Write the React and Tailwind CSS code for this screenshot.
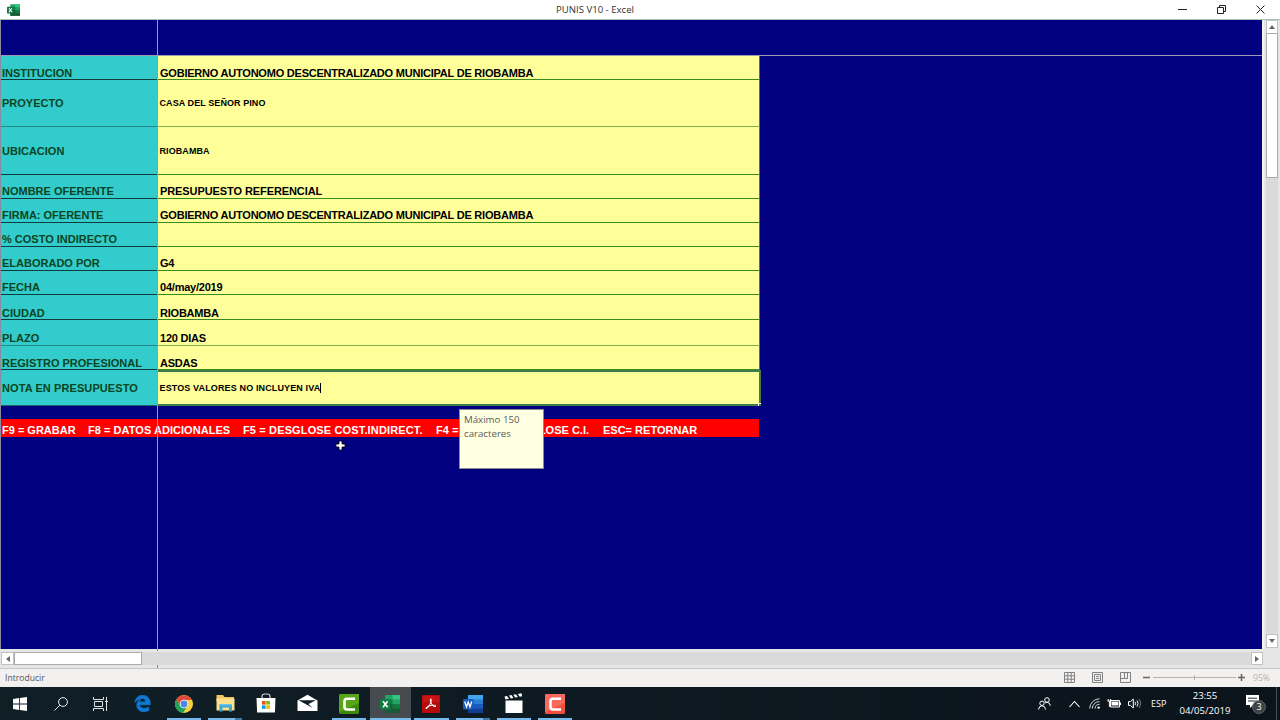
import React from 'react';
import { FaEdgeLegacy } from 'react-icons/fa6';

const dark = { line: 'border-[#123c3c]', vline: 'border-b-[#3c8a1e]' };
const soft = { line: 'border-[#26888a]', vline: 'border-b-[#7fae4c]' };

const rows = [
  { label: 'INSTITUCION', value: 'GOBIERNO AUTONOMO DESCENTRALIZADO MUNICIPAL DE RIOBAMBA', h: 'h-[24px]', pad: 'pt-[11px]', ...dark },
  { label: 'PROYECTO', value: 'CASA DEL SEÑOR PINO', small: true, h: 'h-[47px]', pad: 'pt-[17px]', ...soft },
  { label: 'UBICACION', value: 'RIOBAMBA', small: true, h: 'h-[48px]', pad: 'pt-[18px]', ...dark },
  { label: 'NOMBRE OFERENTE', value: 'PRESUPUESTO REFERENCIAL', wide: true, h: 'h-[24px]', pad: 'pt-[10px]', ...dark },
  { label: 'FIRMA: OFERENTE', value: 'GOBIERNO AUTONOMO DESCENTRALIZADO MUNICIPAL DE RIOBAMBA', h: 'h-[24px]', pad: 'pt-[10px]', ...dark },
  { label: '% COSTO INDIRECTO', value: '', h: 'h-[24px]', pad: 'pt-[10px]', ...dark },
  { label: 'ELABORADO POR', value: 'G4', h: 'h-[24px]', pad: 'pt-[10px]', ...dark },
  { label: 'FECHA', value: '04/may/2019', h: 'h-[24px]', pad: 'pt-[10px]', ...dark },
  { label: 'CIUDAD', value: 'RIOBAMBA', h: 'h-[25px]', pad: 'pt-[12px]', ...dark },
  { label: 'PLAZO', value: '120 DIAS', h: 'h-[26px]', pad: 'pt-[12px]', ...soft },
  { label: 'REGISTRO PROFESIONAL', value: 'ASDAS', h: 'h-[24px]', pad: 'pt-[11px]', ...dark },
];

function valueText(r) {
  if (r.small) return 'pl-[1.5px] text-[9px] tracking-[0.08px]';
  return r.wide ? 'pl-[2px] text-[11px] tracking-[-0.09px]' : 'pl-[2px] text-[11px] tracking-[-0.22px]';
}

function ExcelIcon({ className }) {
  return (
    <svg className={className} viewBox="0 0 20 18">
      <rect x="5" y="0" width="15" height="18" rx="1" fill="#21a366" />
      <rect x="12.5" y="0" width="7.5" height="4.5" fill="#33c481" />
      <rect x="5" y="4.5" width="7.5" height="4.5" fill="#107c41" />
      <rect x="5" y="9" width="15" height="9" fill="#185c37" />
      <rect x="12.5" y="9" width="7.5" height="4.5" fill="#107c41" />
      <rect x="0" y="4" width="10.5" height="10.5" rx="1" fill="#107c41" />
      <path d="M3 6.3 7.6 12.2M7.6 6.3 3 12.2" stroke="#fff" strokeWidth="1.6" />
    </svg>
  );
}

function WordIcon() {
  return (
    <svg className="h-[18px] w-[20px]" viewBox="0 0 20 18">
      <rect x="5" y="0" width="15" height="18" rx="1" fill="#2b7cd3" />
      <rect x="5" y="0" width="15" height="4.5" fill="#41a5ee" />
      <rect x="5" y="9" width="15" height="4.5" fill="#185abd" />
      <rect x="5" y="13.5" width="15" height="4.5" fill="#103f91" />
      <rect x="0" y="4" width="10.5" height="10.5" rx="1" fill="#185abd" />
      <path d="M1.7 6.5 3.5 12 5.2 7 7 12 8.8 6.5" stroke="#fff" strokeWidth="1.3" fill="none" />
    </svg>
  );
}

function CamtasiaIcon({ from, to }) {
  return (
    <svg className="h-[20px] w-[20px]" viewBox="0 0 20 20">
      <rect width="20" height="20" rx="1.5" fill={to} />
      <path d="M1.5 0H20V9L0 18V1.5Q0 0 1.5 0Z" fill={from} />
      <path d="M16 4.7H8Q5.5 4.7 5.5 7.2V13Q5.5 15.5 8 15.5H16" fill="none" stroke="#fff" strokeWidth="2.6" />
    </svg>
  );
}

function ChromeIcon() {
  return (
    <svg className="h-[18px] w-[18px]" viewBox="0 0 18 18">
      <circle cx="9" cy="9" r="9" fill="#f9cf3d" />
      <path d="M9 9 1.2 4.5A9 9 0 0 1 16.8 4.9H9Z" fill="#dd4b3e" />
      <path d="M1.2 4.5A9 9 0 0 0 8 17.95L12.5 11 9 9 5.2 11Z" fill="#1fa25b" />
      <path d="M1.2 4.5 5.3 11 9 5Z" fill="#dd4b3e" />
      <path d="M1.2 4.5 5.5 11.2 4.2 8.5Z" fill="#1fa25b" />
      <circle cx="9" cy="9" r="4.3" fill="#fff" />
      <circle cx="9" cy="9" r="3.4" fill="#4a86e8" />
    </svg>
  );
}

function ExplorerIcon() {
  return (
    <svg className="h-[17px] w-[19px]" viewBox="0 0 19 17">
      <path d="M.5 0h6.5l1.5 2H18v4H.5Z" fill="#f0c75e" />
      <path d="M.5 3.5h18V15.5H.5Z" fill="#fbe08e" />
      <path d="M3.5 9h12.5v7.5h-3v-4H6.5v4h-3Z" fill="#3ba7d9" />
      <path d="M3.5 9h12.5v1.5H3.5Z" fill="#69c5e8" />
    </svg>
  );
}

function StoreIcon() {
  return (
    <svg className="-mt-[2px] h-[20px] w-[20px]" viewBox="0 0 20 20">
      <path d="M6 5V3.5Q6 1 8.5 1h3Q14 1 14 3.5V5" fill="none" stroke="#c8d0d4" strokeWidth="1.2" />
      <path d="M.5 5h19l-.6 14.5H1.1Z" fill="#fff" />
      <rect x="6" y="8" width="3.6" height="3.6" fill="#f05021" />
      <rect x="10.3" y="8" width="3.6" height="3.6" fill="#7db900" />
      <rect x="6" y="12.3" width="3.6" height="3.6" fill="#00a3ee" />
      <rect x="10.3" y="12.3" width="3.6" height="3.6" fill="#fdb900" />
    </svg>
  );
}

function AcrobatIcon() {
  return (
    <svg className="h-[18px] w-[18px]" viewBox="0 0 18 18">
      <rect width="18" height="18" rx="1" fill="#b40c0c" />
      <rect x="1" y="1" width="16" height="6" fill="#c81414" />
      <path d="M8.2 4.2Q9.6 3.2 9.3 5.5 8.7 9.5 5.2 13.3 3.7 14.4 4 13 5.2 11 9 10.4 13.8 9.8 14 11.2 13.2 12.4 11 10.8 8.5 8.5 8.2 4.2Z" fill="none" stroke="#fff" strokeWidth="1" />
    </svg>
  );
}

function ClapperIcon() {
  return (
    <svg className="-mt-[1px] h-[20px] w-[20px]" viewBox="0 0 20 20">
      <path d="M1.5 7.5h17V20h-17Z" fill="#fff" />
      <path d="M.5 3.5 3 3l2 2.8-3.5.8ZM5 2.6l2.5-.5 2 2.8-2.7.5ZM9.3 1.8l2.6-.5 2 2.8-2.7.5ZM13.8 1 17.5.3l.6 2.9-2.3.5Z" fill="#fff" />
    </svg>
  );
}

function MailIcon() {
  return (
    <svg className="-mt-[1px] h-[18px] w-[21px]" viewBox="0 0 21 18">
      <path d="M.5 6.5 10.5.7l10 5.8V17H.5Z" fill="#fff" />
      <path d="M1.5 6.3h17.5L11.5 10l4 3.8Z" fill="#101c23" />
    </svg>
  );
}

const apps = [
  { id: 'edge', icon: <FaEdgeLegacy className="h-[17px] w-[17px] text-[#0f78d4]" stroke="currentColor" strokeWidth="22" /> },
  { id: 'chrome', icon: <ChromeIcon />, bar: true },
  { id: 'explorer', icon: <ExplorerIcon />, bar: true, multi: true },
  { id: 'store', icon: <StoreIcon /> },
  { id: 'mail', icon: <MailIcon /> },
  { id: 'camtasia', icon: <CamtasiaIcon from="#58a618" to="#3f8a0c" />, bar: true },
  { id: 'excel', icon: <ExcelIcon className="h-[18px] w-[20px]" />, bar: true, active: true },
  { id: 'acrobat', icon: <AcrobatIcon />, bar: true },
  { id: 'word', icon: <WordIcon />, bar: true, multi: true },
  { id: 'movies', icon: <ClapperIcon />, bar: true },
  { id: 'recorder', icon: <CamtasiaIcon from="#f96a5d" to="#f0503f" />, bar: true },
];

function TitleBar() {
  return (
    <header className="relative flex h-[20px] items-center border-b border-[#a9c4b8] bg-white">
      <ExcelIcon className="ml-[7px] h-[12px] w-[13px]" />
      <div className="absolute inset-x-0 top-[2px] text-center font-['Open_Sans',sans-serif] text-[9.6px] leading-[15px] text-[#333]"><span className="relative -left-[45px]">PUNIS V10 - Excel</span></div>
      <div className="mr-[15px] ml-auto flex items-center gap-[30px]">
        <svg className="h-[9px] w-[9px]" viewBox="0 0 9 9"><path d="M0 4.5h9" stroke="#222" /></svg>
        <svg className="h-[9px] w-[9px]" viewBox="0 0 9 9"><path d="M.5 2.5h6v6h-6ZM2.5 2V.5h6v6H7" fill="none" stroke="#222" /></svg>
        <svg className="h-[9px] w-[9px]" viewBox="0 0 9 9"><path d="M.5.5l8 8M8.5.5l-8 8" stroke="#222" /></svg>
      </div>
    </header>
  );
}

function Sheet() {
  return (
    <main className="relative h-[629px] w-[1262px] overflow-hidden border-l border-[#8a8aa0] bg-[#000080] font-['Liberation_Sans',sans-serif] font-bold">
      <div className="h-[36px] border-b border-[#9a9ab4]" />
      {rows.map((r) => (
        <div key={r.label} className={`flex ${r.h} w-[759px]`}>
          <div className={`w-[156px] border-b bg-[#33cccc] pl-[1px] ${r.line} ${r.pad} text-[11px] leading-[12px] whitespace-nowrap text-[#0b4422]`}>{r.label}</div>
          <div className={`flex-1 border-r border-b border-l border-r-[#3c8a1e] border-l-[#8f8f8f] bg-[#ffff99] ${r.vline} ${r.pad} leading-[12px] whitespace-nowrap text-black ${valueText(r)}`}>{r.value}</div>
        </div>
      ))}
      <div className="flex h-[36px] w-[760px]">
        <div className="w-[156px] border-b border-[#1c6466] bg-[#33cccc] pt-[12px] pl-[1px] text-[11px] leading-[12px] tracking-[0.09px] whitespace-nowrap text-[#0b4422]">NOTA EN PRESUPUESTO</div>
        <div className="relative flex flex-1 items-start border-t-2 border-r-2 border-b-2 border-l border-[#3f7d4d] border-l-[#8f8f8f] bg-[#ffff99] pt-[10px] pl-[1.5px] text-[9px] leading-[12px] tracking-[0.13px] whitespace-nowrap text-black">
          ESTOS VALORES NO INCLUYEN IVA
          <span className="mt-[1px] h-[10px] w-px bg-black" />
          <span className="absolute -right-[2px] -bottom-[2px] h-[3px] w-[3px] border-t border-l border-white bg-[#217346]" />
        </div>
      </div>
      <div className="mt-[13px] flex h-[18px] w-[758px] bg-[#ff0000] pt-[5px] pl-[1px] text-[11px] leading-[12px] whitespace-nowrap text-white">
        <span className="w-[86px]">F9 = GRABAR</span>
        <span className="w-[155px] tracking-[0.04px]">F8 = DATOS ADICIONALES</span>
        <span className="w-[193px] tracking-[0.14px]">F5 = DESGLOSE COST.INDIRECT.</span>
        <span className="flex w-[167px] justify-between pr-[14px]"><span>F4 =</span><span>DESGLOSE C.I.</span></span>
        <span>ESC= RETORNAR</span>
      </div>
      <div className="absolute top-0 left-[156px] h-full w-px bg-[#9a9aa8]" />
      <div className="absolute top-[389px] left-[458px] h-[60px] w-[85px] border border-[#8a8a90] bg-[#ffffe1] pt-[3px] pl-[4px] font-['Open_Sans',sans-serif] text-[9.7px] leading-[13.5px] font-normal text-[#5c5c5c]">Máximo 150<br />caracteres</div>
      <svg className="absolute top-[420px] left-[334px] h-[11px] w-[11px]" viewBox="0 0 11 11">
        <path d="M4 1h3v3h3v3H7v3H4V7H1V4h3Z" fill="#fff" stroke="#000" strokeWidth=".8" />
      </svg>
    </main>
  );
}

function VerticalScroll() {
  return (
    <aside className="flex h-[629px] w-[18px] flex-col items-center border-l-2 border-[#f2f2f2] bg-[#e6e6e6]">
      <div className="flex h-[14px] w-[12px] items-center justify-center border border-[#c2c2c2] bg-white">
        <svg className="h-[4px] w-[6px]" viewBox="0 0 6 4"><path d="M3 0 6 4H0Z" fill="#666" /></svg>
      </div>
      <div className="-mt-px h-[145px] w-[12px] border border-[#ababab] bg-white" />
      <div className="w-[12px] flex-1 bg-[#dadada]" />
      <div className="mb-[1px] flex h-[14px] w-[12px] items-center justify-center border border-[#c2c2c2] bg-white">
        <svg className="h-[4px] w-[6px]" viewBox="0 0 6 4"><path d="M3 4 6 0H0Z" fill="#666" /></svg>
      </div>
    </aside>
  );
}

function HorizontalScroll() {
  return (
    <div className="relative flex h-[20px] items-start border-b border-[#c6c6c6] bg-[#e6e6e6] pt-[3px]">
      <div className="ml-[1px] flex h-[13px] w-[13px] items-center justify-center border border-[#c2c2c2] bg-white">
        <svg className="h-[6px] w-[4px]" viewBox="0 0 4 6"><path d="M0 3 4 0V6Z" fill="#666" /></svg>
      </div>
      <div className="h-[13px] w-[128px] border border-[#ababab] bg-white" />
      <div className="h-[13px] w-[1109px] bg-[#dadada]" />
      <div className="flex h-[13px] w-[12px] items-center justify-center border border-[#c2c2c2] bg-white">
        <svg className="h-[6px] w-[4px]" viewBox="0 0 4 6"><path d="M4 3 0 0V6Z" fill="#666" /></svg>
      </div>
      <span className="absolute top-0 left-[157px] h-[2px] w-px bg-[#888]" />
      <span className="absolute top-[16px] left-[157px] h-[3px] w-px bg-[#888]" />
    </div>
  );
}

function StatusBar() {
  return (
    <div className="flex h-[18px] items-center bg-[#f2f1ef] font-['Open_Sans',sans-serif] text-[8.6px] text-[#555]">
      <span className="mt-[1px] ml-[5px]">Introducir</span>
      <svg className="-mt-[1px] ml-auto h-[11px] w-[11px]" viewBox="0 0 11 11"><path d="M.5.5h10v10H.5ZM.5 3.8h10M.5 7.2h10M3.8.5v10M7.2.5v10" fill="none" stroke="#808080" /></svg>
      <svg className="-mt-[1px] ml-[17px] h-[11px] w-[11px]" viewBox="0 0 11 11"><path d="M.5.5h10v10H.5ZM2.5 2.5h6v6h-6ZM4 4.5h3M4 6.5h3" fill="none" stroke="#808080" /></svg>
      <svg className="-mt-[1px] ml-[17px] h-[11px] w-[11px]" viewBox="0 0 11 11"><path d="M.5.5h10v10H.5ZM4.5.5v6h-4M7.5.5v6H4.5" fill="none" stroke="#808080" /></svg>
      <svg className="-mt-[1px] ml-[12px] h-[9px] w-[103px]" viewBox="0 0 103 9">
        <path d="M0 4.5h7M95 4.5h7M98.5 1v7" stroke="#666" strokeWidth="1.6" />
        <path d="M10 4.5h83M51.5 2v5" stroke="#b4b4b4" />
      </svg>
      <span className="mt-[1px] mr-[10px] ml-[7px] w-[17px] text-[#b3b3b3]">95%</span>
    </div>
  );
}

function Taskbar() {
  return (
    <footer className="flex h-[33px] bg-gradient-to-r from-[#101f26] to-[#0b131b] font-['Open_Sans',sans-serif] text-white">
      <div className="flex w-[40px] items-center justify-center">
        <svg className="h-[14px] w-[14px]" viewBox="0 0 14 14"><path d="M0 2 6.2 1.1V6.6H0ZM7 1 14 0V6.6H7ZM0 7.4H6.2V12.9L0 12ZM7 7.4H14V14L7 13Z" fill="#fff" /></svg>
      </div>
      <div className="flex w-[41px] items-center justify-center">
        <svg className="h-[14px] w-[14px]" viewBox="0 0 14 14"><circle cx="9" cy="5" r="4.4" fill="none" stroke="#e8eef0" /><path d="M5.8 8.2.5 13.5" stroke="#e8eef0" /></svg>
      </div>
      <div className="flex w-[41px] items-center justify-center pr-[3px]">
        <svg className="h-[14px] w-[15px]" viewBox="0 0 15 14"><path d="M1.5 4.5h8v5h-8ZM.5 0v2.5h10V0M.5 14v-2.5h10V14M13.5 0v14M12 4.5h3" fill="none" stroke="#dfe6e8" /></svg>
      </div>
      {apps.map((a) => (
        <div key={a.id} className={`relative flex w-[41.25px] items-center justify-center ${a.active ? 'bg-[#454b4f]' : ''}`}>
          {a.icon}
          {a.bar && (
            <span className={`absolute bottom-0 flex h-[2px] bg-[#76b9ed] ${a.active ? 'inset-x-0' : 'inset-x-[3.5px]'}`}>
              {a.multi && <span className="ml-auto w-[7px] bg-[#3f78a4]" />}
            </span>
          )}
        </div>
      ))}
      <div className="ml-auto flex items-center">
        <svg className="h-[13px] w-[13px]" viewBox="0 0 13 13"><circle cx="9" cy="3" r="2.3" fill="none" stroke="#fff" /><circle cx="4" cy="6.3" r="2.2" fill="none" stroke="#fff" /><path d="M.6 12.5Q.8 8.8 4 8.8T7.5 12.5M7 6Q8 5.3 9 5.3 12 5.4 12.4 8.8" fill="none" stroke="#fff" /></svg>
        <svg className="ml-[18px] h-[8px] w-[11px]" viewBox="0 0 11 8"><path d="M.5 7 5.5 1.5 10.5 7" fill="none" stroke="#fff" strokeWidth="1.1" /></svg>
        <svg className="ml-[9px] h-[11px] w-[11px]" viewBox="0 0 11 11"><path d="M.7 10.5A9.8 9.8 0 0 1 10.5.8M3.3 10.5A7 7 0 0 1 10.5 3.6M6 10.5A4.5 4.5 0 0 1 10.5 6.3" fill="none" stroke="#d5dadc" /><circle cx="9.6" cy="9.6" r="1.2" fill="#fff" /></svg>
        <svg className="ml-[7px] h-[9px] w-[14px]" viewBox="0 0 14 9"><path d="M4.5 2.5h7v4h-7Z" fill="#fff" /><path d="M3.5 1.5h9v6.5h-9ZM13.5 3.5v2.5M.5 2h4M1.2 0v2M3.6 0v2M2.4 2v5.5h1" fill="none" stroke="#fff" /></svg>
        <svg className="ml-[7px] h-[11px] w-[14px]" viewBox="0 0 14 11"><path d="M.5 3.6h2L5.3 1v9L2.5 7.4h-2Z" fill="none" stroke="#fff" /><path d="M7 3.8q1.2 1.7 0 3.4M9 2.5q2.2 3 0 6" fill="none" stroke="#fff" /><path d="M11 1.2q3.2 4.3 0 8.6" fill="none" stroke="#7b8287" /></svg>
        <span className="ml-[9px] w-[17px] text-[9px]">ESP</span>
        <div className="-mt-[2px] ml-[10px] w-[54px] text-center text-[9.6px] leading-[15px]">23:55<br />04/05/2019</div>
        <div className="relative ml-[13px] h-[20px] w-[22px]">
          <svg className="h-[20px] w-[22px]" viewBox="0 0 22 20">
            <path d="M1 1h13v10H8l-3 3v-3H1Z" fill="#fff" />
            <path d="M3 4.2h9M3 7h9" stroke="#202a30" />
            <circle cx="14" cy="13" r="6.5" fill="#3c4347" stroke="#7d8488" strokeWidth=".6" />
          </svg>
          <span className="absolute top-[8px] left-[8px] w-[12px] text-center text-[9px] leading-[10px]">3</span>
        </div>
        <span className="ml-[9px] h-[33px] w-px bg-[#4a5258]" />
        <span className="w-[3px]" />
      </div>
    </footer>
  );
}

export default function App() {
  return (
    <div className="flex h-[720px] w-[1280px] flex-col overflow-hidden bg-white">
      <TitleBar />
      <div className="flex">
        <Sheet />
        <VerticalScroll />
      </div>
      <HorizontalScroll />
      <StatusBar />
      <Taskbar />
    </div>
  );
}
